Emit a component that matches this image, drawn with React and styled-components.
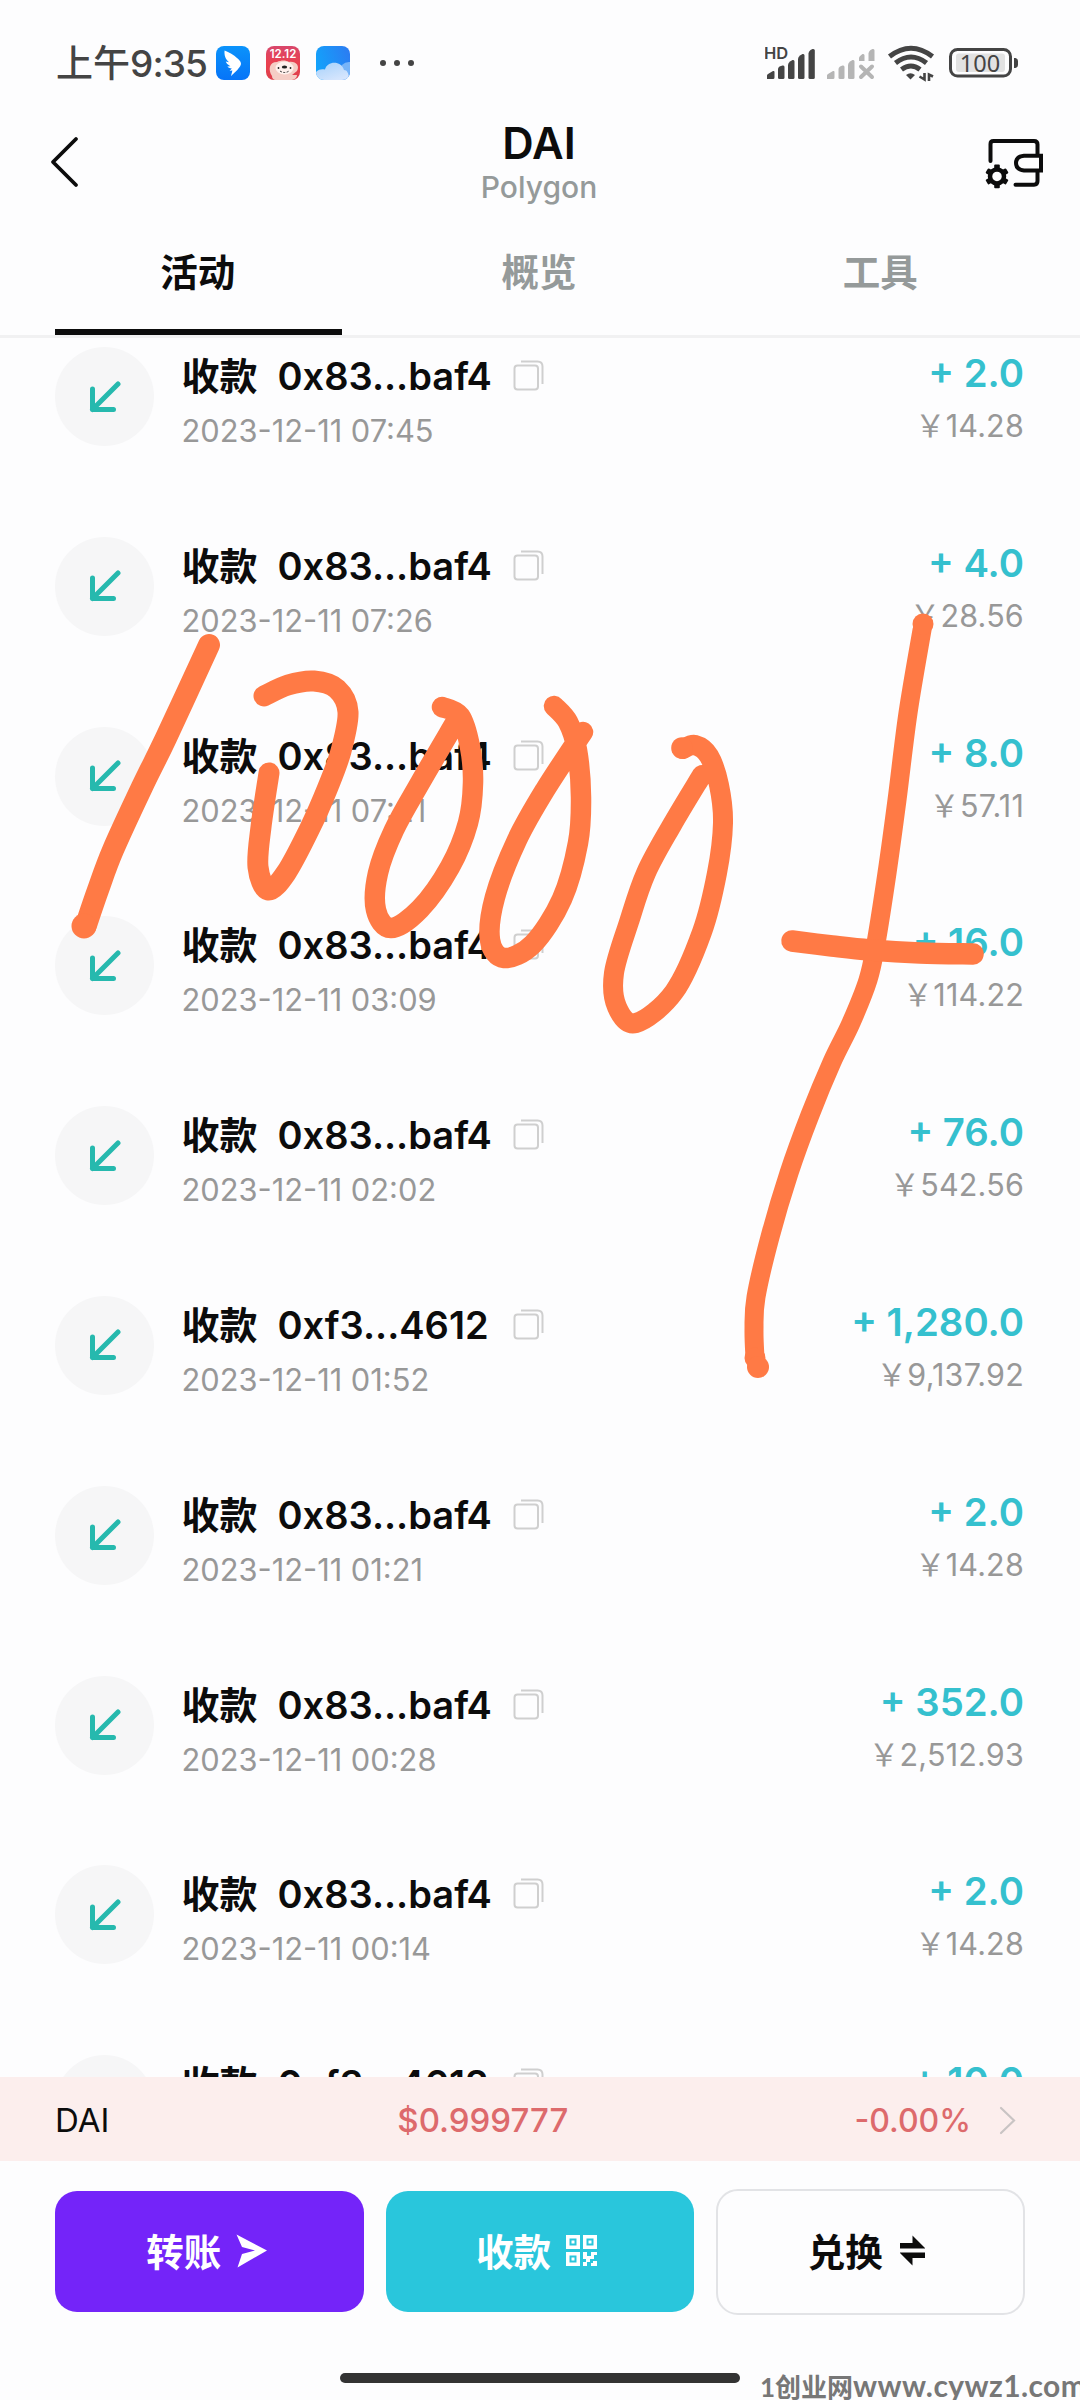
import React from 'react'
import styled, { createGlobalStyle } from 'styled-components'

const rows = [
  { address: '0x83...baf4', time: '2023-12-11 07:45', amount: '2.0', fiat: '14.28' },
  { address: '0x83...baf4', time: '2023-12-11 07:26', amount: '4.0', fiat: '28.56' },
  { address: '0x83...baf4', time: '2023-12-11 07:21', amount: '8.0', fiat: '57.11' },
  { address: '0x83...baf4', time: '2023-12-11 03:09', amount: '16.0', fiat: '114.22' },
  { address: '0x83...baf4', time: '2023-12-11 02:02', amount: '76.0', fiat: '542.56' },
  { address: '0xf3...4612', time: '2023-12-11 01:52', amount: '1,280.0', fiat: '9,137.92' },
  { address: '0x83...baf4', time: '2023-12-11 01:21', amount: '2.0', fiat: '14.28' },
  { address: '0x83...baf4', time: '2023-12-11 00:28', amount: '352.0', fiat: '2,512.93' },
  { address: '0x83...baf4', time: '2023-12-11 00:14', amount: '2.0', fiat: '14.28' },
  { address: '0xf3...4612', time: '2023-12-11 00:02', amount: '10.0', fiat: '71.39' },
]

// pen strokes over the list, each one a run of points
const strokes = [
  { w: 22, p: [[209, 645], [166, 738], [142, 787], [113, 850], [98, 890], [86, 925]] },
  { w: 21, p: [[264, 696], [288, 685], [314, 681], [337, 689], [348, 712], [341, 751], [328, 787], [310, 828], [286, 873], [268, 890], [258, 867], [261, 827], [269, 773]] },
  { w: 20.5, p: [[442, 707], [460, 716], [470, 747], [473, 783], [468, 823], [450, 867], [420, 909], [391, 928], [376, 910], [378, 873], [394, 830], [420, 783], [455, 723]] },
  { w: 20.5, p: [[554, 706], [568, 722], [577, 750], [581, 797], [578, 843], [562, 899], [533, 944], [504, 958], [490, 940], [495, 897], [517, 840], [545, 790], [583, 732]] },
  { w: 20, p: [[683, 749], [695, 745], [709, 756], [719, 785], [723, 823], [717, 873], [702, 932], [674, 992], [636, 1023], [617, 1007], [614, 973], [629, 922], [646, 873], [672, 825], [702, 775]] },
  { w: 19, p: [[922, 630], [908, 713], [897, 800], [887, 873], [876, 943], [868, 980], [851, 1023], [832, 1062], [810, 1115], [789, 1173], [770, 1237], [756, 1297], [754, 1330], [755, 1358]] },
  { w: 21.5, p: [[792, 941], [832, 946], [870, 950], [920, 953], [973, 954]] },
]

const dots = [[84, 926, 12.5], [923, 624, 10.5], [755, 1358, 10.5], [758, 1367, 11], [682, 748, 10.8]]

const smooth = (p) => {
  let d = `M${p[0][0]} ${p[0][1]}`
  for (let i = 0; i < p.length - 1; i++) {
    const a = p[i - 1] || p[i]
    const b = p[i]
    const c = p[i + 1]
    const e = p[i + 2] || c
    d += ` C${b[0] + (c[0] - a[0]) / 6} ${b[1] + (c[1] - a[1]) / 6} ${c[0] - (e[0] - b[0]) / 6} ${c[1] - (e[1] - b[1]) / 6} ${c[0]} ${c[1]}`
  }
  return d
}

const WingIcon = () => (
  <svg width="34" height="34" viewBox="0 0 34 34">
    <defs>
      <linearGradient id="wing" x1="0" y1="0" x2="0" y2="1">
        <stop offset="0" stopColor="#0b93fb" />
        <stop offset="1" stopColor="#0674f8" />
      </linearGradient>
    </defs>
    <rect width="34" height="34" rx="8" fill="url(#wing)" />
    <path d="M8.6 4.6C13 6.5 18 9 21 12C24.500 15 25.500 17 24.800 18.800C24.200 20.800 22.500 22.500 21.300 24L15 30L16.400 24.600L13.600 24.800L15.800 22.600C13.600 22.200 12.200 21.400 11.400 20.400L14.400 20.200C11.800 18.800 10.200 17.200 9.800 15.600L13 16.200C9.500 13.600 8 9 8.600 4.600Z" fill="#fff" />
  </svg>
)

const DogIcon = () => (
  <svg width="34" height="34" viewBox="0 0 34 34">
    <defs>
      <linearGradient id="dog" x1="0" y1="0" x2="0" y2="1">
        <stop offset="0" stopColor="#d8476b" />
        <stop offset="0.500" stopColor="#ea4050" />
        <stop offset="1" stopColor="#dd3f4a" />
      </linearGradient>
    </defs>
    <rect width="34" height="34" rx="8" fill="url(#dog)" />
    <path d="M6 30C2 24 3 16 11 16C15 14 20 14 23 16C30 15 34 20 31 25L26 29H31Q31 33 26 34H9Q6 33 6 30Z" fill="#f5cdc5" />
    <ellipse cx="18.500" cy="22" rx="9" ry="6.500" fill="#fff1ed" />
    <ellipse cx="18.500" cy="21" rx="2.700" ry="1.600" fill="#222" />
    <circle cx="12.500" cy="22" r="0.900" fill="#222" />
    <circle cx="24.500" cy="22" r="0.900" fill="#222" />
    <path d="M14 25Q18.500 28 23 25" stroke="#222" strokeWidth="0.900" strokeDasharray="2 1.500" fill="none" />
    <text x="17" y="12" textAnchor="middle" fontFamily="Inter, sans-serif" fontWeight="600" fontSize="11.500" fill="#fff">12.12</text>
  </svg>
)

const CloudIcon = () => (
  <svg width="34" height="34" viewBox="0 0 34 34">
    <defs>
      <linearGradient id="sky" x1="0" y1="0.600" x2="1" y2="0.300">
        <stop offset="0" stopColor="#12a3fb" />
        <stop offset="1" stopColor="#2b7df2" />
      </linearGradient>
      <linearGradient id="cloud" x1="0" y1="0" x2="0.600" y2="1">
        <stop offset="0" stopColor="#a5d1fb" />
        <stop offset="1" stopColor="#d5e5fd" />
      </linearGradient>
      <clipPath id="skyclip"><rect width="34" height="34" rx="8" /></clipPath>
    </defs>
    <g clipPath="url(#skyclip)">
      <rect width="34" height="34" fill="url(#sky)" />
      <circle cx="33" cy="26" r="10" fill="#78b4f8" />
      <path d="M0 26C3 22.500 7 23 9 23.500C11 15 25 14 28 24C31 24 33 27 33 34H0Z" fill="url(#cloud)" />
    </g>
  </svg>
)

const SignalIcons = () => (
  <svg width="254" height="40" viewBox="765 43 254 40">
    <g fill="#444">
      <text x="764" y="59" fontFamily="Inter, sans-serif" fontWeight="600" fontSize="16.500">HD</text>
      <path d="M767 79V75.500Q767 74.500 768 74L773 71Q774.500 70.500 774.500 72V77.500Q774.500 79 773 79Z" />
      <path d="M778 77.500V69Q778 67.500 779.500 66.500L782.500 65.500Q784.500 65 784.500 67V77.500Q784.500 79 783 79H779.500Q778 79 778 77.500Z" />
      <path d="M788 77.500V65Q788 63 790 61.500L792.500 60Q794.500 59.500 794.500 61.500V77.500Q794.500 79 793 79H789.500Q788 79 788 77.500Z" />
      <path d="M798 77.500V59Q798 57 800 55.500L802.500 54Q804.500 53.500 804.500 55.500V77.500Q804.500 79 803 79H799.500Q798 79 798 77.500Z" />
      <path d="M808.500 77.500V53.500Q808.500 51.500 810.500 50L812.500 49Q814.800 48.500 814.800 50.500V77.500Q814.800 79 813.300 79H810Q808.500 79 808.500 77.500Z" />
    </g>
    <g fill="#b5b5b5">
      <path d="M827 79V75.500Q827 74.500 828 74L833 71Q834.500 70.500 834.500 72V77.500Q834.500 79 833 79Z" />
      <path d="M838.500 77.500V69Q838.500 67.500 840 66.500L842.500 65.500Q844.500 65 844.500 67V77.500Q844.500 79 843 79H840Q838.500 79 838.500 77.500Z" />
      <path d="M848 77.500V65Q848 63 850 61.500L852.500 60Q854.500 59.500 854.500 61.500V77.500Q854.500 79 853 79H849.500Q848 79 848 77.500Z" />
      <path d="M859 61V58Q859 56.500 862.500 54Q864.500 53.500 864.500 55.500V61Z" />
      <path d="M868.500 61V53.500Q868.500 51.500 870.500 50L872.500 49Q874.500 48.500 874.500 50.500V61Z" />
      <path d="M861 66.500L872 77M872 66.500L861 77" stroke="#b5b5b5" strokeWidth="4" strokeLinecap="round" />
    </g>
    <g fill="none" stroke="#444" strokeWidth="5">
      <path d="M889.500 56.500Q911 40 932.500 56.500" />
      <path d="M895.500 63Q911 51 926.500 63" />
      <path d="M901.500 69.500Q911 62.500 920 69.500" />
      <path d="M910.500 79.500L906 75Q910.500 71.500 915 75Z" fill="#444" stroke="none" />
      <path d="M924.500 73V79.500L919.500 76.500M929 81V74.500L933 76.500" strokeWidth="2.600" />
    </g>
    <rect x="950.500" y="49.500" width="60" height="26.500" rx="7" fill="none" stroke="#444" strokeWidth="3" />
    <rect x="956" y="53.500" width="49" height="18.500" rx="3" fill="#e2e2e2" />
    <path d="M1014 58H1015.500Q1018 58.500 1018 61V65Q1018 67.500 1015.500 68H1014Z" fill="#444" />
    <text x="980" y="71.500" textAnchor="middle" fontFamily="'Noto Sans', sans-serif" fontSize="23.500" fill="#444">100</text>
  </svg>
)

const WalletIcon = () => (
  <svg width="60" height="54" viewBox="984 135 60 54">
    <g fill="none" stroke="#0c0c0c" strokeWidth="4" strokeLinecap="round">
      <path d="M990.500 160V143Q990.500 140 993.500 140H1034Q1037.500 140 1037.500 143.500V154" />
      <path d="M1041 154.800H1024Q1016 155.500 1016 162T1024 169.500H1041Z" />
      <path d="M1037.500 170V180Q1037.500 183.700 1034 183.700H1015.500" />
    </g>
    <g transform="translate(997 175.400)">
      <circle r="7" fill="none" stroke="#0c0c0c" strokeWidth="4.500" />
      {[0, 60, 120, 180, 240, 300].map((a) => (
        <rect key={a} x="-2.800" y="-11.800" width="5.600" height="5" rx="1" fill="#0c0c0c" transform={`rotate(${a})`} />
      ))}
    </g>
  </svg>
)

const BackIcon = () => (
  <svg width="30" height="52" viewBox="0 0 30 52">
    <path d="M26 3L3 26L26 49" fill="none" stroke="#0c0c0c" strokeWidth="3.800" strokeLinecap="round" strokeLinejoin="round" />
  </svg>
)

const ReceiveIcon = () => (
  <svg width="32" height="32" viewBox="0 0 32 32">
    <path d="M29 3L3.500 28.500M3.500 8V28.500H24.500" fill="none" stroke="#26b9ae" strokeWidth="5" strokeLinecap="round" strokeLinejoin="round" />
  </svg>
)

const CopyIcon = () => (
  <svg width="31" height="31" viewBox="0 0 31 31">
    <g fill="none" stroke="#cfcfcf" strokeWidth="2">
      <rect x="1.500" y="5.500" width="23.500" height="24" rx="3" />
      <path d="M8 1.500H24.500Q29.500 1.500 29.500 6.500V24" />
    </g>
  </svg>
)

const SendIcon = () => (
  <svg width="32" height="34" viewBox="0 0 32 34">
    <path d="M0.500 0.500L31 16.500L1.500 33.500L6 20L19 16.500L6 13Z" fill="#fff" />
  </svg>
)

const QrIcon = () => (
  <svg width="31" height="31" viewBox="0 0 31 31" fill="#fff">
    <path fillRule="evenodd" d="M0 0H14V14H0ZM3.500 3.500V10.500H10.500V3.500ZM17 0H31V14H17ZM20.500 3.500V10.500H27.500V3.500ZM0 17H14V31H0ZM3.500 20.500V27.500H10.500V20.500Z" />
    <path d="M5.500 5.500H8.500V8.500H5.500ZM22.500 5.500H25.500V8.500H22.500ZM5.500 22.500H8.500V25.500H5.500Z" />
    <path d="M17 17H21V21H25V17H31V20H28V24H24V27H21V31H17V27H20V24H17ZM27 26H31V31H25V28H27Z" />
  </svg>
)

const SwapIcon = () => (
  <svg width="25" height="31" viewBox="0 0 25 31" fill="#0c0c0c">
    <path d="M0 8H12.500V0.500L25 13V13.500H0ZM25 23H12.500V30.500L0 18V17.500H25Z" />
  </svg>
)

const ChevronIcon = () => (
  <svg width="17" height="29" viewBox="0 0 17 29">
    <path d="M2 2L15 14.500L2 27" fill="none" stroke="#c9c4c4" strokeWidth="2.200" strokeLinecap="round" />
  </svg>
)

const App = () => {
  return (
    <Screen>
      <GlobalStyle />
      <StatusBar>
        <Clock>上午<b>9:35</b></Clock>
        <Apps>
          <WingIcon />
          <DogIcon />
          <CloudIcon />
        </Apps>
        <More><i /><i /><i /></More>
        <SignalIcons />
      </StatusBar>

      <Header>
        <BackIcon />
        <Heading>
          <h1>DAI</h1>
          <p>Polygon</p>
        </Heading>
        <WalletIcon />
      </Header>

      <Tabs>
        <Tab $active>活动</Tab>
        <Tab>概览</Tab>
        <Tab>工具</Tab>
      </Tabs>

      <List>
        {rows.map((row, i) => (
          <Row key={i}>
            <Badge><ReceiveIcon /></Badge>
            <Info>
              <Title>
                <span>收款</span>
                <span>{row.address}</span>
                <CopyIcon />
              </Title>
              <Time>{row.time}</Time>
            </Info>
            <Values>
              <Amount>+ {row.amount}</Amount>
              <Fiat>￥{row.fiat}</Fiat>
            </Values>
          </Row>
        ))}
      </List>

      <PriceBar>
        <span>DAI</span>
        <Price>$0.999777</Price>
        <Change>-0.00% <ChevronIcon /></Change>
      </PriceBar>

      <Actions>
        <Button $bg="#7424f9">转账 <SendIcon /></Button>
        <Button $bg="#29c6dc" $shift={3}>收款 <QrIcon /></Button>
        <OutlineButton $shift={5}>兑换 <SwapIcon /></OutlineButton>
      </Actions>

      <HomeBar />
      <Watermark>1创业网<span>www.cywz1.com</span></Watermark>

      <Scribble viewBox="0 0 1080 2400">
        {strokes.map((s, i) => (
          <path key={i} d={smooth(s.p)} strokeWidth={s.w} />
        ))}
        {dots.map(([x, y, r]) => (
          <circle key={x} cx={x} cy={y} r={r} />
        ))}
      </Scribble>
    </Screen>
  )
}

const GlobalStyle = createGlobalStyle`
*{
  box-sizing: border-box;
}
body{
  margin: 0;
  background: #fdfdfe;
}
h1, p{
  margin: 0;
}
svg{
  display: block;
  flex: none;
}
`;

const Screen = styled.div`
position: relative;
display: flex;
flex-direction: column;
width: 1080px;
height: 2400px;
overflow: hidden;
background: #fdfdfe;
color: #0c0c0c;
font-family: Inter, 'Noto Sans CJK SC', sans-serif;
`;

const StatusBar = styled.div`
display: flex;
align-items: center;
height: 126px;
padding: 0 61px 0 56px;
svg:last-child{
  margin-left: auto;
}
`;

const Clock = styled.div`
width: 160px;
padding-top: 2px;
font-size: 37px;
line-height: 44px;
font-weight: 500;
color: #444;
white-space: nowrap;
b{
  font-weight: 500;
  letter-spacing: -0.9px;
}
`;

const Apps = styled.div`
display: flex;
gap: 16px;
&& svg:last-child{
  margin-left: 0;
}
`;

const More = styled.div`
display: flex;
gap: 8px;
margin-left: 30px;
i{
  width: 6px;
  height: 6px;
  border-radius: 50%;
  background: #444;
}
`;

const Header = styled.header`
display: flex;
justify-content: space-between;
height: 94px;
padding: 10px 36px 0 50px;
`;

const Heading = styled.div`
width: 300px;
margin: -11px 0 0 14px;
text-align: center;
h1{
  font-size: 43.5px;
  line-height: 36px;
  font-weight: 600;
}
p{
  padding-top: 7px;
  font-size: 30px;
  line-height: 38px;
  font-weight: 500;
  color: #959a9a;
}
`;

const Tabs = styled.nav`
display: flex;
gap: 54px;
height: 118px;
padding: 0 55px;
border-bottom: 3px solid #f1f1f2;
`;

const Tab = styled.div`
flex: 1;
height: 115px;
padding: 25px 2px 0 0;
text-align: center;
font-size: 37.5px;
line-height: 56px;
font-weight: 700;
color: ${(props) => (props.$active ? '#0c0c0c' : '#959a9a')};
border-bottom: 6px solid ${(props) => (props.$active ? '#0c0c0c' : 'transparent')};
`;

const List = styled.div`
height: 1739px;
padding: 9px 56px 0 55px;
overflow: hidden;
`;

const Row = styled.div`
display: flex;
height: 189.8px;
`;

const Badge = styled.div`
display: flex;
align-items: center;
justify-content: center;
width: 99px;
height: 99px;
border-radius: 50%;
background: #f6f6f7;
`;

const Info = styled.div`
padding: 6px 0 0 27.5px;
`;

const Title = styled.div`
display: flex;
align-items: center;
font-size: 38px;
line-height: 46px;
font-weight: 600;
white-space: pre;
span + span{
  width: 213px;
  margin-left: 20px;
}
svg{
  margin: -1px 0 0 22px;
}
`;

const Time = styled.div`
margin-top: 13px;
font-size: 30.8px;
line-height: 38px;
color: #989898;
`;

const Values = styled.div`
margin-left: auto;
padding-top: 3px;
text-align: right;
`;

const Amount = styled.div`
font-size: 38.3px;
line-height: 46px;
font-weight: 600;
color: #35c0ce;
`;

const Fiat = styled.div`
margin-top: 11px;
font-size: 30.5px;
line-height: 38px;
letter-spacing: 0.2px;
color: #989898;
`;

const PriceBar = styled.div`
display: flex;
align-items: center;
height: 84px;
padding: 2px 64px 0 55px;
background: #fceeed;
font-size: 33px;
`;

const Price = styled.span`
margin-left: 288px;
font-weight: 500;
color: #dd6a6c;
`;

const Change = styled.span`
display: flex;
align-items: center;
gap: 28px;
margin-left: auto;
font-size: 32px;
font-weight: 450;
color: #dd6a6c;
`;

const Actions = styled.div`
display: grid;
grid-template-columns: repeat(3, 1fr);
align-items: center;
gap: 22px;
height: 181px;
padding: 0 55px;
`;

const Button = styled.button`
display: flex;
align-items: center;
justify-content: center;
gap: 15px;
height: 121px;
padding: 0 ${(props) => 4 + (props.$shift || 0)}px 5px 0;
border: 0;
border-radius: 22px;
background: ${(props) => props.$bg};
color: #fff;
font-family: inherit;
font-size: 37.5px;
font-weight: 700;
svg{
  margin-top: 3px;
}
`;

const OutlineButton = styled(Button)`
gap: 17px;
height: 126px;
border: 2.5px solid #e2e3e6;
background: #fdfdfe;
color: #0c0c0c;
`;

const HomeBar = styled.div`
align-self: center;
width: 400px;
height: 10px;
margin-top: 31px;
border-radius: 5px;
background: #333;
`;

const Watermark = styled.div`
position: absolute;
left: 760px;
top: 2365px;
font-family: Lato, 'Noto Sans CJK SC', sans-serif;
font-size: 26px;
line-height: 40px;
font-weight: 700;
color: #777;
white-space: nowrap;
span{
  font-size: 30px;
  letter-spacing: 0.4px;
}
`;

const Scribble = styled.svg`
position: absolute;
inset: 0;
width: 1080px;
height: 2400px;
path{
  fill: none;
  stroke: #ff7a45;
  stroke-linecap: round;
  stroke-linejoin: round;
}
circle{
  fill: #ff7a45;
}
`;

export default App
